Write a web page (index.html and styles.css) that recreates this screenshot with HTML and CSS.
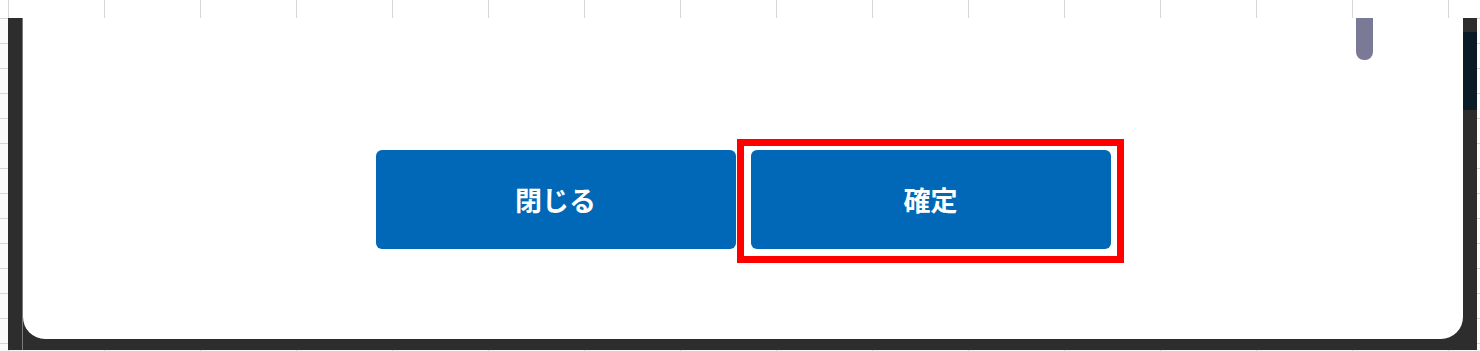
FILE: index.html
```html
<!DOCTYPE html>
<html lang="ja">
<head>
    <meta charset="UTF-8">
    <meta name="viewport" content="width=device-width, initial-scale=1.0">
    <title>確認</title>
    <link rel="stylesheet" href="styles.css">
</head>
<body>
    <div class="sheet">
        <div class="col-head"></div>

        <div class="middle">
            <div class="row-gutter"></div>

            <div class="overlay">
                <div class="overlay-left"></div>

                <div class="modal">
                    <div class="scroll-thumb"></div>
                    <div class="modal-actions">
                        <button class="btn">閉じる</button>
                        <div class="btn-wrap highlighted">
                            <button class="btn">確定</button>
                        </div>
                    </div>
                </div>

                <div class="overlay-right">
                    <div class="nav-strip"></div>
                </div>
            </div>

            <div class="row-gutter right"></div>
        </div>

        <div class="col-foot"></div>
    </div>
</body>
</html>
```

FILE: styles.css
```css
body {
    margin: 0;
    font-family: "Noto Sans CJK JP", "Noto Sans", sans-serif;
    background: #fff;
}

.sheet {
    width: 1480px;
    height: 351px;
    display: flex;
    flex-direction: column;
    overflow: hidden;
}

.col-head {
    height: 18px;
    background: repeating-linear-gradient(to right, #d7d7d7 0 1px, #fff 1px 96px);
    background-position: 8px 0;
}

.col-foot {
    height: 1px;
    background: repeating-linear-gradient(to right, #d7d7d7 0 1px, #f7f7f7 1px 96px);
    background-position: 8px 0;
}

.middle {
    display: flex;
    height: 332px;
}

.row-gutter {
    width: 8px;
    background: repeating-linear-gradient(to bottom, #d7d7d7 0 1px, #fbfbfb 1px 25px);
}

.row-gutter.right {
    width: 3px;
}

.overlay {
    flex: 1;
    display: flex;
    background: #2d2d2d;
}

.overlay-left {
    width: 14px;
    border-right: 1px solid #7a7a7a;
}

.overlay-right {
    width: 14px;
    padding-top: 14px;
}

.nav-strip {
    height: 78px;
    background: #0b1a27;
}

.modal {
    flex: 1;
    position: relative;
    height: 321px;
    background: #fff;
    border-radius: 0 0 22px 22px;
    box-sizing: border-box;
    padding-top: 132px;
}

.scroll-thumb {
    position: absolute;
    top: 0;
    right: 90px;
    width: 17px;
    height: 42px;
    background: #7b7a96;
    border-radius: 0 0 8px 8px;
}

.modal-actions {
    display: flex;
    justify-content: center;
    gap: 15px;
}

.btn {
    width: 360px;
    height: 99px;
    border: none;
    border-radius: 6px;
    background: #0068b6;
    color: #fff;
    font-family: "Noto Sans CJK JP", "Noto Sans", sans-serif;
    font-size: 27px;
    font-weight: bold;
    padding: 0;
    display: block;
}

.btn-wrap {
    position: relative;
}

.highlighted::after {
    content: "";
    position: absolute;
    top: -11px;
    left: -14px;
    right: -13px;
    bottom: -14px;
    border: 7px solid #ff0000;
    pointer-events: none;
}
```
